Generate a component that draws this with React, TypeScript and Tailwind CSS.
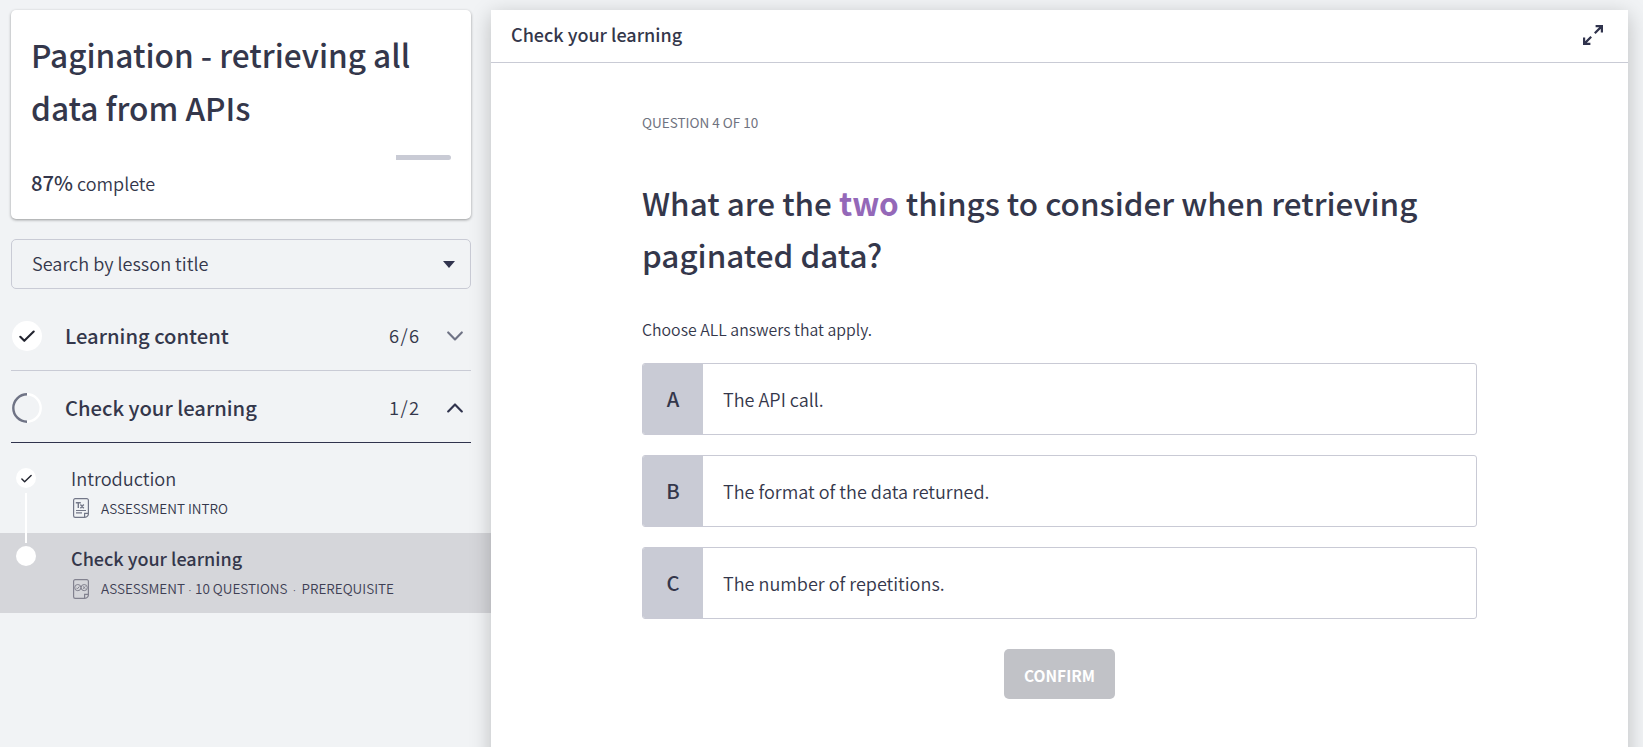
import React from "react";

function CheckMark({ size }: { size: number }) {
  return (
    <svg width={size} height={size} viewBox="0 0 16 16" fill="none" stroke="#22242f" strokeWidth="2.1" strokeLinecap="round" strokeLinejoin="round">
      <path d="M1.3 8.8 5.3 12.8 14.7 3.6" />
    </svg>
  );
}

function Chevron({ up, color }: { up?: boolean; color: string }) {
  return (
    <svg width="16" height="10" viewBox="0 0 16 10" fill="none" stroke={color} strokeWidth="2.1" strokeLinecap="round" strokeLinejoin="round">
      <path d={up ? "M1.2 8.4 8 1.4 14.8 8.4" : "M1.2 1.4 8 8.4 14.8 1.4"} />
    </svg>
  );
}

function PageIcon({ children, color }: { children: React.ReactNode; color: string }) {
  return (
    <svg width="16" height="20" viewBox="0 0 16 20" fill="none" stroke={color} strokeWidth="1.2" className="shrink-0">
      <path d="M15.4 15.4V2.2A1.6 1.6 0 0 0 13.8.6H2.2A1.6 1.6 0 0 0 .6 2.2v15.6a1.6 1.6 0 0 0 1.6 1.6h9.6a3.6 3.6 0 0 0 3.6-4H11.6V19.2" />
      {children}
    </svg>
  );
}

function TextPageIcon() {
  return (
    <PageIcon color="#737788">
      <path d="M2.8 4.8h5M5.3 4.8V10M7.4 6.6l3.4 3.6M10.8 6.6l-3.4 3.6" strokeWidth="1.4" />
      <path d="M3 12.5h10M3 14.9h6" />
    </PageIcon>
  );
}

function QuizPageIcon() {
  return (
    <PageIcon color="#82828f">
      <circle cx="4.8" cy="8.6" r="3.1" strokeWidth="1" />
      <circle cx="11.2" cy="8.6" r="3.1" strokeWidth="1" />
      <path d="M3.3 8.7l1.1 1.1 2-2.3M9.9 7.3l2.6 2.6M12.5 7.3 9.9 9.9" strokeWidth="1" />
    </PageIcon>
  );
}

function Answer({ letter, text }: { letter: string; text: string }) {
  return (
    <div className="flex h-[72px] overflow-hidden rounded-[3px] border border-[#c9cad5]">
      <div className="flex w-[60px] items-center justify-center bg-[#c9cbd5] text-[20.2px] leading-[30px] font-medium">{letter}</div>
      <div className="flex items-center pl-[20px] text-[18.05px] leading-[30px] font-[350]">{text}</div>
    </div>
  );
}

export default function App() {
  return (
    <div className="flex h-[747px] w-[1643px] overflow-hidden bg-[#f1f3f5] font-['Noto_Sans_CJK_SC','Noto_Sans',sans-serif] text-[#34374b]">
      <aside className="w-[491px] shrink-0 pt-[10px]">
        <div className="ml-[11px] h-[209px] w-[460px] rounded-[5px] bg-white pt-[18px] pr-5 pl-5 shadow-[0_1px_3px_rgba(0,0,0,0.38)]">
          <h1 className="text-[31.6px] leading-[52.8px] font-medium whitespace-nowrap">
            Pagination - retrieving all
            <br />
            data from APIs
          </h1>
          <div className="mt-[21px] flex h-[5px] overflow-hidden rounded-full bg-white">
            <div className="w-[365px]" />
            <div className="flex-1 bg-[#c9cbd5]" />
          </div>
          <div className="mt-[8px] flex items-baseline gap-[4px] leading-[30px]">
            <span className="text-[20.2px] font-medium">87%</span>
            <span className="text-[18px] font-[350]">complete</span>
          </div>
        </div>

        <div className="mt-5 ml-[11px] flex h-[50px] w-[460px] items-center justify-between rounded-[5px] border border-[#c9cbd5] pr-[15px] pl-[20px] text-[18.1px] leading-[30px] font-[350]">
          <span className="pb-[3px]">Search by lesson title</span>
          <svg width="12" height="7" viewBox="0 0 12 7" fill="#30334d">
            <path d="M0 0h12L6 7z" />
          </svg>
        </div>

        <div className="ml-[11px] flex h-[82px] w-[460px] items-center border-b border-[#c9cbd5] pt-3">
          <div className="ml-px flex size-[30px] items-center justify-center rounded-full bg-white">
            <CheckMark size={16} />
          </div>
          <span className="ml-[23px] text-[20.2px] leading-[32px] font-medium">Learning content</span>
          <span className="ml-auto w-[32px] text-[18.4px] font-[350] tracking-[1.4px]">6/6</span>
          <div className="mr-[8px] ml-[26px]">
            <Chevron color="#6f7385" />
          </div>
        </div>
        <div className="ml-[11px] flex h-[72px] w-[460px] items-center border-b border-[#30334d] pt-[2px]">
          <svg width="30" height="30" viewBox="0 0 30 30" fill="none" strokeWidth="2.4" className="ml-px">
            <path d="M15 1.3a13.7 13.7 0 0 1 0 27.4" stroke="#fff" />
            <path d="M15 1.3a13.7 13.7 0 0 0 0 27.4" stroke="#6f7385" />
          </svg>
          <span className="ml-[23px] text-[20.2px] leading-[32px] font-medium">Check your learning</span>
          <span className="ml-auto w-[32px] text-[18.4px] font-[350] tracking-[1.4px]">1/2</span>
          <div className="mr-[8px] ml-[26px]">
            <Chevron up color="#30334d" />
          </div>
        </div>

        <div className="flex h-[90px] pl-4">
          <div className="flex w-5 flex-col items-center pt-[25px]">
            <div className="flex size-5 shrink-0 items-center justify-center rounded-full bg-white">
              <CheckMark size={11} />
            </div>
            <div className="relative z-10 mt-[5px] h-[50px] w-[2px] shrink-0 bg-white" />
          </div>
          <div className="pt-[20px] pl-[35px]">
            <div className="text-[18.2px] leading-[30px] font-[350]">Introduction</div>
            <div className="mt-[4px] flex items-center gap-[12px] pl-[2px] text-[13.5px] leading-[22px] font-[350]">
              <TextPageIcon />
              <span>ASSESSMENT INTRO</span>
            </div>
          </div>
        </div>
        <div className="flex h-20 bg-[#d5d6da] pl-4">
          <div className="mt-[13px] size-5 rounded-full bg-white" />
          <div className="pt-[10px] pl-[35px]">
            <div className="text-[18px] leading-[30px] font-medium">Check your learning</div>
            <div className="mt-[4px] flex items-center gap-[12px] pl-[2px] text-[13.5px] leading-[22px] font-[350] whitespace-nowrap text-[#3e4054]">
              <QuizPageIcon />
              <span className="flex">
                <span>ASSESSMENT</span>
                <span className="w-[10px] pt-[2px] text-center font-['Noto_Sans']">·</span>
                <span>10 QUESTIONS</span>
                <span className="w-[14px] pt-[2px] text-center font-['Noto_Sans']">·</span>
                <span>PREREQUISITE</span>
              </span>
            </div>
          </div>
        </div>
      </aside>

      <main className="mt-[10px] h-[760px] w-[1137px] shrink-0 bg-white shadow-[0_5px_20px_rgba(0,0,0,0.22)]">
        <header className="flex h-[53px] items-center justify-between border-b border-[#c9cbd5] pr-[25px] pb-[2px] pl-5">
          <h2 className="pb-[3px] text-[18px] leading-[30px] font-medium">Check your learning</h2>
          <svg width="20" height="20" viewBox="0 0 20 20" fill="none" stroke="#30334d" strokeWidth="2.2">
            <path d="M11.8 8.2 18.6 1.4M12.6 1.1H18.9V7.4M8.2 11.8 1.4 18.6M1.1 12.6V18.9H7.4" />
          </svg>
        </header>
        <div className="ml-[151px] w-[835px]">
          <div className="pt-[48px] text-[13.5px] leading-[22px] text-[#6f7380]">QUESTION 4 OF 10</div>
          <h3 className="mt-[44px] text-[31.45px] leading-[52px] font-medium whitespace-nowrap">
            What are the <strong className="font-bold text-[#9468b8]">two</strong> things to consider when retrieving
            <br />
            paginated data?
          </h3>
          <p className="mt-[36px] text-[15.85px] leading-[26px] font-[350]">Choose ALL answers that apply.</p>
          <div className="mt-5 flex flex-col gap-5">
            <Answer letter="A" text="The API call." />
            <Answer letter="B" text="The format of the data returned." />
            <Answer letter="C" text="The number of repetitions." />
          </div>
          <div className="mt-[30px] flex justify-center">
            <button className="h-[50px] w-[111px] rounded-[5px] bg-[#c1c2c7] pt-px text-[15.5px] leading-[24px] font-bold text-white">CONFIRM</button>
          </div>
        </div>
      </main>
    </div>
  );
}
